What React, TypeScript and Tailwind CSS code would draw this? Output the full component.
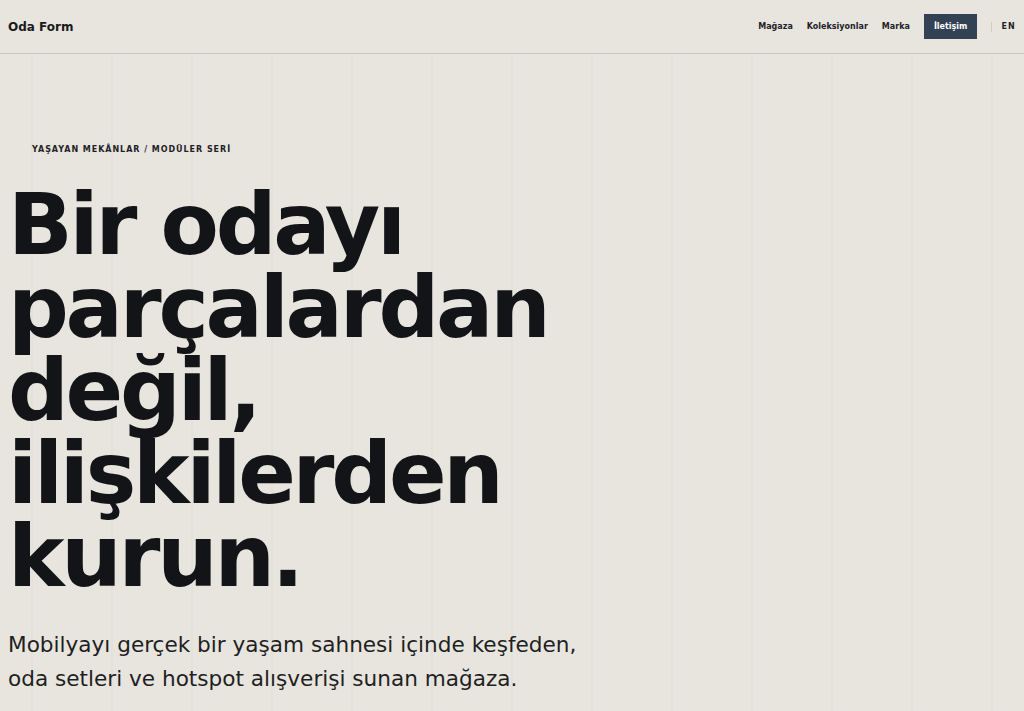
import React from 'react';

const navLinks = ['Mağaza', 'Koleksiyonlar', 'Marka'];

const App = () => {
    return (
        <div className="min-h-[711px] bg-[#e8e5df] text-[#121418] font-['DejaVu_Sans',sans-serif]">
            <header className="h-[54px] flex items-center justify-between px-2 border-b border-[#c9c6c0] bg-[#e8e5df]">
                <a href="#" className="text-[12px] font-bold text-[#1a1a1a]">Oda Form</a>
                <nav className="flex items-center gap-[14px]">
                    {navLinks.map((link) => (
                        <a key={link} href="#" className="text-[8px] font-bold text-[#1f2227]">
                            {link}
                        </a>
                    ))}
                    <a href="#" className="h-[25px] px-[10px] flex items-center bg-[#334155] text-white text-[8px] font-bold">
                        İletişim
                    </a>
                    <span className="h-[10px] w-px bg-[#cfccc6]"></span>
                    <button className="-ml-[5px] text-[8px] font-bold tracking-[0.15em] text-[#1f2227]">EN</button>
                </nav>
            </header>

            <main className="min-h-[657px] px-2 pt-[90px] bg-[repeating-linear-gradient(90deg,transparent_0_31px,rgba(0,0,0,0.018)_31px_33px,transparent_33px_80px)]">
                <p className="pl-6 text-[8px] leading-[12px] font-bold tracking-[0.12em] uppercase text-[#1f2227]">
                    YAŞAYAN MEKÂNLAR / MODÜLER SERİ
                </p>
                <h1 className="mt-[27px] text-[85px] leading-[83px] font-bold tracking-[-0.038em] text-[#121418]">
                    Bir odayı<br />
                    parçalardan<br />
                    değil,<br />
                    ilişkilerden<br />
                    kurun.
                </h1>
                <p className="mt-[30px] text-[21.6px] leading-[34px] text-[#1f1f1f]">
                    Mobilyayı gerçek bir yaşam sahnesi içinde keşfeden,<br />
                    oda setleri ve hotspot alışverişi sunan mağaza.
                </p>
            </main>
        </div>
    );
};

export default App;
